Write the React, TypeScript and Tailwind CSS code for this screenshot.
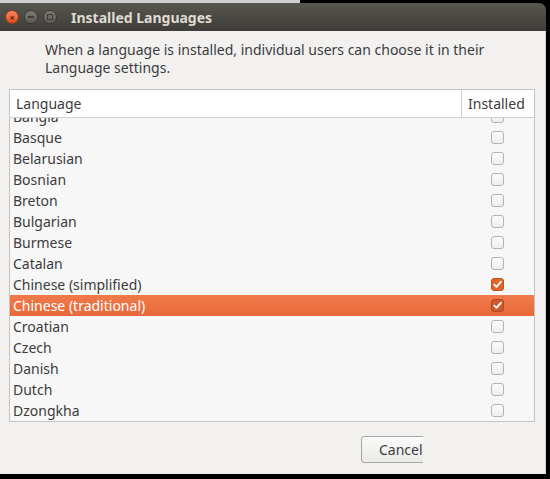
import React from "react";

const langs: { name: string; checked?: boolean; selected?: boolean }[] = [
  { name: "Bangla" },
  { name: "Basque" },
  { name: "Belarusian" },
  { name: "Bosnian" },
  { name: "Breton" },
  { name: "Bulgarian" },
  { name: "Burmese" },
  { name: "Catalan" },
  { name: "Chinese (simplified)", checked: true },
  { name: "Chinese (traditional)", checked: true, selected: true },
  { name: "Croatian" },
  { name: "Czech" },
  { name: "Danish" },
  { name: "Dutch" },
  { name: "Dzongkha" },
];

function Check({ checked, selected }: { checked?: boolean; selected?: boolean }) {
  if (checked) {
    return (
      <div
        className={
          "w-[13px] h-[13px] rounded-[3px] border flex items-center justify-center " +
          (selected ? "bg-[#cf5a2a] border-[#b04a1e]" : "bg-[#e2652e] border-[#bb5424]")
        }
      >
        <svg width="9" height="9" viewBox="0 0 9 9">
          <path d="M1.3 4.6 L3.5 6.8 L7.8 1.8" fill="none" stroke="white" strokeWidth="1.8" strokeLinecap="round" strokeLinejoin="round" />
        </svg>
      </div>
    );
  }
  return <div className="w-[13px] h-[13px] rounded-[3px] border border-[#b6b3ae] bg-gradient-to-b from-[#fbfbfa] to-[#efeeec]" />;
}

export default function App() {
  return (
    <div className="w-[550px] h-[479px] bg-black relative overflow-hidden" style={{ fontFamily: '"Noto Sans", "Open Sans", sans-serif' }}>
      <div className="h-[3px] w-[300px] bg-[#cfcfcd]" />
      <div className="w-[546px] h-[471px] flex flex-col">
        {/* title bar */}
        <div className="h-[28px] rounded-tr-[7px] bg-gradient-to-b from-[#57564f] to-[#3e3d39] flex items-center">
          <div className="w-[14px] h-[14px] ml-[5px] rounded-full bg-gradient-to-b from-[#f58a5f] to-[#de4a17] border border-[#8a3a1c] flex items-center justify-center">
            <span className="text-[9px] leading-none text-[#5a2010] font-bold">×</span>
          </div>
          <div className="w-[14px] h-[14px] ml-[5px] rounded-full bg-gradient-to-b from-[#7b7a74] to-[#5c5b56] border border-[#3a3935] flex items-center justify-center">
            <div className="w-[6px] h-[2px] bg-[#3d3c38]" />
          </div>
          <div className="w-[14px] h-[14px] ml-[5px] rounded-full bg-gradient-to-b from-[#7b7a74] to-[#5c5b56] border border-[#3a3935] flex items-center justify-center">
            <div className="w-[6px] h-[6px] border border-[#3d3c38]" />
          </div>
          <span className="ml-[14px] text-[14px] font-bold text-[#dfdbd2]">Installed Languages</span>
        </div>
        {/* body */}
        <div className="flex-1 bg-[#f2f1f0] relative border-r border-[#d6d4d0]">
          <p className="ml-[45px] mt-[10px] text-[14px] leading-[18px] text-[#3c3c3c] w-[470px]">
            When a language is installed, individual users can choose it in their Language settings.
          </p>
          <div className="ml-[9px] mt-[12px] w-[526px] h-[333px] border border-[#c6c4c0] bg-[#f7f7f7] flex flex-col">
            <div className="h-[28px] flex border-b border-[#d3d1cd] bg-white text-[14px] text-[#3c3c3c]">
              <div className="flex-1 pl-[6px] flex items-center">Language</div>
              <div className="w-[73px] border-l border-[#d3d1cd] pl-[6px] flex items-center">Installed</div>
            </div>
            <div className="flex-1 overflow-hidden">
              <div className="mt-[-12px]">
                {langs.map((l) => (
                  <div
                    key={l.name}
                    className={
                      "h-[21px] flex items-center text-[14px] " +
                      (l.selected ? "bg-gradient-to-b from-[#f07a4a] to-[#e8693a] text-white" : "text-[#3c3c3c]")
                    }
                  >
                    <div className="flex-1 pl-[3px]">{l.name}</div>
                    <div className="w-[73px] flex justify-center">
                      <Check checked={l.checked} selected={l.selected} />
                    </div>
                  </div>
                ))}
              </div>
            </div>
          </div>
          <div className="absolute left-[361px] top-[405px] w-[62px] h-[27px] overflow-hidden">
            <div className="w-[90px] h-[27px] rounded-[3px] border border-[#a9a7a3] bg-gradient-to-b from-[#fafafa] to-[#ebeae8] pl-[17px] flex items-center text-[14px] text-[#3c3c3c]">
              Cancel
            </div>
          </div>
        </div>
      </div>
    </div>
  );
}
